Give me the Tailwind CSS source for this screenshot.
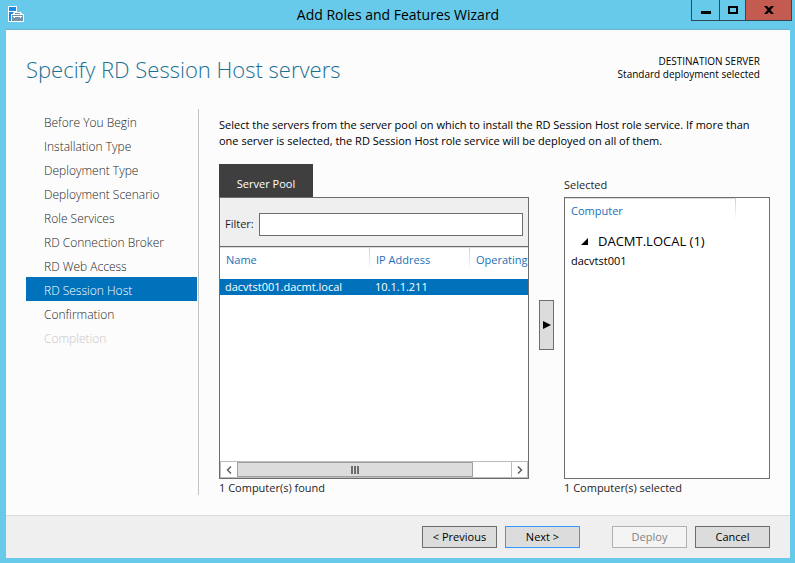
<!DOCTYPE html>
<html lang="en">
<head>
  <meta charset="UTF-8">
  <meta name="viewport" content="width=device-width, initial-scale=1">
  <title>Add Roles and Features Wizard</title>
  <script src="https://cdn.jsdelivr.net/npm/@tailwindcss/browser@4"></script>
</head>
<body class="min-h-screen flex flex-col bg-[#67caea] pl-[6px] pr-[5px] pb-[5px] font-['Open_Sans','Noto_Sans',sans-serif] text-[11px] leading-4 text-[#1e1e1e]">

  <!-- Title bar -->
  <header class="relative h-[29px] shrink-0 flex items-center justify-center">
    <svg class="absolute left-[2px] top-[6px]" width="16" height="16" viewBox="0 0 16 16">
      <path d="M0 0h9v6h3v2H5v8H0z" fill="#fff"/>
      <path d="M1 1h7v4H1zM1 6h5l-1 2H3v7H1z" fill="#1e88e5"/>
      <path d="M3 8h2l1-2h7l1 2h2v8H3z" fill="#fff"/>
      <path d="M4 9h11v6H4z" fill="#7593a6"/>
      <path d="M7 7h5v1H7z" fill="#7593a6"/>
      <path d="M5 10h9v1h-1v1h-1v-1H7v1H6v-1H5z" fill="#fff"/>
    </svg>
    <h1 class="text-[14px] leading-5 text-black">Add Roles and Features Wizard</h1>
    <div class="absolute right-[-2px] top-0 flex h-[21px] border border-t-0 border-[#2f4a55]">
      <button type="button" aria-label="Minimize" class="w-[28px] flex items-center justify-center border-r border-[#2f4a55]">
        <svg width="12" height="12" viewBox="0 0 12 12" shape-rendering="crispEdges"><path d="M1 7h10v3H1z"/></svg>
      </button>
      <button type="button" aria-label="Maximize" class="w-[26px] flex items-center justify-center border-r border-[#2f4a55]">
        <svg width="10" height="8" viewBox="0 0 10 8" shape-rendering="crispEdges"><path d="M0 0h10v8H0zM2 2v4h6V2z" fill-rule="evenodd"/></svg>
      </button>
      <button type="button" aria-label="Close" class="w-[45px] flex items-center justify-center bg-[#c35b50]">
        <svg width="10" height="8" viewBox="0 0 10 8"><path d="M0 0h3l2 2 2-2h3L6.500 4 10 8H7L5 6 3 8H0l3.500-4z"/></svg>
      </button>
    </div>
  </header>

  <div class="grow flex flex-col bg-[#fcfcfc] border-t border-[#6fb4cb]">
    <div class="flex justify-between items-center h-[79px] pl-[20px] pr-[30px] pb-[2px]">
      <h2 class="text-[22px] leading-8 font-light text-[#1a6f93]">Specify RD Session Host servers</h2>
      <div class="pb-px text-right text-[10px] leading-[13px] text-black">
        <p>DESTINATION SERVER</p>
        <p>Standard deployment selected</p>
      </div>
    </div>

    <main class="grow flex pl-[20px] pr-[20px] pb-[20px]">
      <!-- Steps -->
      <nav class="w-[173px] shrink-0 border-r border-[#c3c3c3] pr-px text-[12px] leading-5 font-light">
        <a href="#" class="block pt-1 pl-[18px]">Before You Begin</a>
        <a href="#" class="block pt-1 pl-[18px]">Installation Type</a>
        <a href="#" class="block pt-1 pl-[18px]">Deployment Type</a>
        <a href="#" class="block pt-1 pl-[18px]">Deployment Scenario</a>
        <a href="#" class="block pt-1 pl-[18px]">Role Services</a>
        <a href="#" class="block pt-1 pl-[18px]">RD Connection Broker</a>
        <a href="#" class="block pt-1 pl-[18px]">RD Web Access</a>
        <a href="#" class="block pt-1 pl-[18px] bg-[#0072bc] text-white" aria-current="step">RD Session Host</a>
        <a href="#" class="block pt-1 pl-[18px]">Confirmation</a>
        <a class="block pt-1 pl-[18px] text-[#c6c6c6]" aria-disabled="true">Completion</a>
      </nav>

      <section class="grow min-w-0 flex flex-col pl-[20px] pt-2">
        <p class="text-black">Select the servers from the server pool on which to install the RD Session Host role service. If more than one server is selected, the RD Session Host role service will be deployed on all of them.</p>

        <div class="grow flex mt-[15px]">
          <!-- Server pool -->
          <div class="grow-3 basis-[310px] min-w-0 flex flex-col">
            <button type="button" class="self-start w-[94px] h-[33px] pt-[6px] bg-[#3f3f3f] text-white">Server Pool</button>
            <div class="grow flex flex-col border border-[#6d6d6d] bg-white">
              <div class="flex items-center gap-1 h-[49px] pt-1 pl-[5px] pr-[5px] bg-[#efefef] border-b border-[#6d6d6d]">
                <label for="filter" class="w-[30px]">Filter:</label>
                <input id="filter" type="text" class="grow min-w-0 h-[23px] px-1 bg-white border border-[#6d6d6d]">
              </div>
              <div class="grow overflow-hidden border-t border-[#dcdcdc]">
                <table class="table-fixed w-full whitespace-nowrap text-left">
                  <thead>
                    <tr class="h-[31px] align-top text-[#1a70b8]">
                      <th class="w-[150px] pl-[6px] pt-[4px] font-normal bg-linear-to-b from-[#cfcfcf] to-white to-70% bg-[length:1px_100%] bg-right bg-no-repeat">Name</th>
                      <th class="w-[100px] pl-[6px] pt-[4px] font-normal bg-linear-to-b from-[#cfcfcf] to-white to-70% bg-[length:1px_100%] bg-right bg-no-repeat">IP Address</th>
                      <th class="pl-[6px] pt-[4px] font-normal overflow-hidden">Operating</th>
                    </tr>
                  </thead>
                  <tbody>
                    <tr class="bg-[#0072bc] text-white">
                      <td class="pl-[5px]">dacvtst001.dacmt.local</td>
                      <td class="pl-[5px]">10.1.1.211</td>
                      <td></td>
                    </tr>
                  </tbody>
                </table>
              </div>
              <!-- Horizontal scroll bar -->
              <div class="flex h-[17px] border border-[#bcbcbc]">
                <button type="button" aria-label="Scroll left" class="w-[16px] flex items-center justify-center">
                  <svg width="6" height="8" viewBox="0 0 6 8"><path d="M5 0.500L1.500 4L5 7.500" fill="none" stroke="#606060" stroke-width="1.500"/></svg>
                </button>
                <div class="grow flex">
                  <div class="w-[86%] flex items-center justify-center bg-[#dcdcdc] border border-[#a0a0a0]">
                    <svg width="8" height="8" viewBox="0 0 8 8" shape-rendering="crispEdges"><path d="M0 0h2v8H0zM3 0h2v8H3zM6 0h2v8H6z" fill="#6d6d6d"/></svg>
                  </div>
                </div>
                <button type="button" aria-label="Scroll right" class="w-[16px] flex items-center justify-center border-l border-[#bcbcbc]">
                  <svg width="6" height="8" viewBox="0 0 6 8"><path d="M1 0.500L4.500 4L1 7.500" fill="none" stroke="#606060" stroke-width="1.500"/></svg>
                </button>
              </div>
            </div>
            <p class="h-4 pt-px">1 Computer(s) found</p>
          </div>

          <button type="button" aria-label="Add selected server" class="w-[15px] h-[50px] mt-[136px] mx-[10px] shrink-0 flex items-center justify-center bg-[#dcdcdc] border border-[#6d6d6d]">
            <svg width="8" height="8" viewBox="0 0 8 8"><path d="M0 0l8 4-8 4z"/></svg>
          </button>

          <!-- Selected servers -->
          <div class="grow-2 basis-[206px] min-w-0 flex flex-col">
            <h3 class="h-[33px] pt-[13px]">Selected</h3>
            <div class="grow border border-[#6d6d6d] bg-white">
              <div class="mr-[33px] h-[31px] pl-[6px] pt-[4px] border-t border-[#dcdcdc] text-[#1a70b8] bg-linear-to-b from-[#cfcfcf] to-white to-70% bg-[length:1px_100%] bg-right bg-no-repeat">Computer</div>
              <div class="flex items-center h-[24px] pl-[16px] gap-[10px] text-[13px] text-black">
                <svg width="7" height="7" viewBox="0 0 7 7"><path d="M7 0v7H0z"/></svg>
                <span>DACMT.LOCAL (1)</span>
              </div>
              <p class="pl-[6px] text-black">dacvtst001</p>
            </div>
            <p class="h-4 pt-px">1 Computer(s) selected</p>
          </div>
        </div>
      </section>
    </main>

    <footer class="flex justify-end items-center gap-2 h-[43px] pr-[20px] bg-[#efefef] border-t border-[#dadada] text-black">
      <button type="button" class="w-[75px] h-[22px] bg-[#dcdcdc] border border-[#6d6d6d]">&lt; Previous</button>
      <button type="button" class="w-[75px] h-[22px] bg-[#dcdcdc] border border-[#3399ff]">Next &gt;</button>
      <button type="button" disabled class="w-[75px] h-[22px] ml-6 bg-[#f4f4f4] border border-[#adb2b5] text-[#838383]">Deploy</button>
      <button type="button" class="w-[75px] h-[22px] bg-[#dcdcdc] border border-[#6d6d6d]">Cancel</button>
    </footer>
  </div>

</body>
</html>
